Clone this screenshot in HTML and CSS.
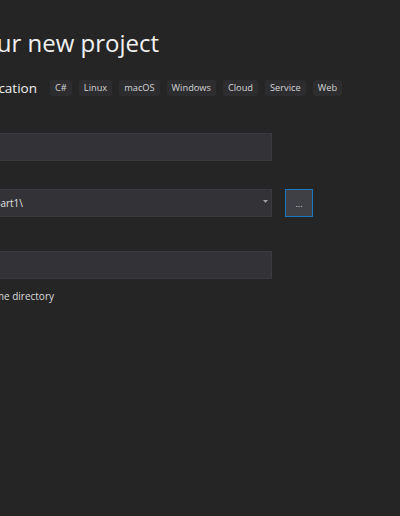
FILE: index.html
```html
<!DOCTYPE html>
<html>
<head>
  <title>Configure your new project</title>
  <link rel="stylesheet" href="styles.css">
</head>
<body>

  <div class="dialog">
    <div class="clip title-clip">
      <h1 class="title">Configure your new project</h1>
    </div>

    <div class="subtitle-row">
      <div class="clip subtitle-clip">
        <span class="subtitle">Console Application</span>
      </div>
      <ul class="tags">
        <li>C#</li>
        <li>Linux</li>
        <li>macOS</li>
        <li>Windows</li>
        <li>Cloud</li>
        <li>Service</li>
        <li>Web</li>
      </ul>
    </div>

    <div class="field field-name">
      <label>Project name</label>
      <div class="input"></div>
    </div>

    <div class="field field-location">
      <label>Location</label>
      <div class="input-row">
        <div class="input select">
          <div class="clip location-clip">
            <span>C:\Users\aryan\source\repos\part1\</span>
          </div>
          <svg class="arrow" width="5" height="3" viewBox="0 0 5 3">
            <path d="M0 0h5L2.5 3z" fill="#a0a0a0"/>
          </svg>
        </div>
        <button class="browse">...</button>
      </div>
    </div>

    <div class="field field-solution">
      <label>Solution name</label>
      <div class="input"></div>
    </div>

    <div class="clip check-clip">
      <label class="check">
        <span class="box"></span>
        Place solution and project in the same directory
      </label>
    </div>
  </div>

</body>
</html>
```

FILE: styles.css
```css
body {
  margin: 0;
  background: #252526;
  color: #f1f1f1;
  font-family: "Open Sans", "Noto Sans", sans-serif;
  overflow: hidden;
}

/* the dialog is cut off on the left, so it starts past the window edge */
.dialog {
  margin-left: -150px;
  padding-top: 27px;
}

/* boxes whose text is right-aligned to where it ends in the screenshot */
.clip {
  display: flex;
  justify-content: flex-end;
  white-space: nowrap;
}

.title-clip {
  width: 309px;
}

.title {
  margin: 0;
  font-size: 24px;
  font-weight: 400;
  line-height: 32px;
}

.subtitle-row {
  display: flex;
  align-items: center;
  margin-top: 21px;
  height: 16px;
}

.subtitle-clip {
  width: 187px;
}

.subtitle {
  font-size: 13.5px;
  line-height: 16px;
}

.tags {
  display: flex;
  gap: 7px;
  list-style: none;
  margin: 0 0 0 13px;
  padding: 0;
}

.tags li {
  height: 16px;
  line-height: 16px;
  padding: 0 5px;
  background: #2d2d30;
  border-radius: 3px;
  font-size: 9.25px;
  color: #d4d4d4;
}

.field label {
  display: block;
  height: 15px;
  margin-bottom: 6px;
  font-size: 11px;
  line-height: 15px;
}

.field-name {
  margin-top: 16px;
}

.field-location {
  margin-top: 7px;
}

.field-solution {
  margin-top: 13px;
}

.input {
  box-sizing: border-box;
  width: 422px;
  height: 28px;
  background: #333337;
  border: 1px solid #3a3a3f;
}

.input-row {
  display: flex;
  gap: 13px;
}

.select {
  display: flex;
  align-items: center;
  font-size: 10px;
  color: #e0e0e0;
}

.location-clip {
  width: 172px;
}

.arrow {
  margin-left: auto;
  margin-right: 3px;
  margin-top: -3px;
}

.browse {
  box-sizing: border-box;
  width: 28px;
  height: 28px;
  padding: 0;
  background: #3f3f46;
  border: 1px solid #1c77c3;
  color: #d0d0d0;
  font-family: inherit;
  font-size: 9px;
  line-height: 1;
}

.check-clip {
  width: 204px;
  margin-top: 10px;
}

.check {
  display: flex;
  align-items: center;
  gap: 6px;
  font-size: 10px;
  line-height: 14px;
  color: #dcdcdc;
}

.box {
  width: 12px;
  height: 12px;
  border: 1px solid #999;
}
```
